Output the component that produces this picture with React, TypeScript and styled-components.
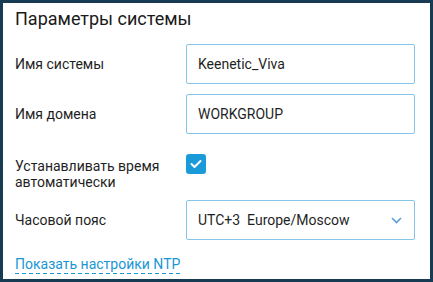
import React from "react";
import styled, { createGlobalStyle } from "styled-components";

const GlobalStyle = createGlobalStyle`
  html, body { margin: 0; padding: 0; background: #ffffff; }
  body { font-family: Roboto, "Noto Sans", Arial, sans-serif; }
  * { box-sizing: border-box; }
`;

const Panel = styled.div`
  width: 433px;
  height: 282px;
  border: 3px solid #173b53;
  background: #ffffff;
  padding: 4px 15px 0 12px;
  color: #1f1f1f;
`;

const Title = styled.h2`
  margin: 0 0 13px 0;
  font-size: 18px;
  font-weight: 400;
  line-height: 24px;
  color: #1a1a1a;
`;

const Form = styled.div`
  display: grid;
  grid-template-columns: 171px 229px;
  row-gap: 10px;
`;

const Label = styled.div<{ $top?: boolean }>`
  font-size: 14px;
  line-height: 16px;
  align-self: ${(p) => (p.$top ? "start" : "center")};
  margin-top: ${(p) => (p.$top ? "14px" : "0")};
  color: #1f1f1f;
`;

const Field = styled.div`
  height: 40px;
  border: 1px solid #84c6e8;
  border-radius: 2px;
  display: flex;
  align-items: center;
  padding: 0 12px 0 11px;
  font-size: 14px;
  color: #1f1f1f;
`;

const SelectText = styled.span`
  flex: 1;
  white-space: pre;
`;

const CheckCell = styled.div`
  height: 40px;
  padding-top: 10px;
`;

const Checkbox = styled.div`
  width: 20px;
  height: 20px;
  border-radius: 3px;
  background: #1a9ad8;
  display: flex;
  align-items: center;
  justify-content: center;
`;

const Footer = styled.div`
  display: flex;
  margin-top: 15px;
`;

const Link = styled.a`
  font-size: 14px;
  line-height: 18px;
  color: #1a96d4;
  text-decoration: none;
  padding-bottom: 1px;
  background-image: linear-gradient(to right, #1a96d4 0 4px, transparent 4px 7px);
  background-size: 7px 1px;
  background-repeat: repeat-x;
  background-position: 0 100%;
`;

export default function App() {
  return (
    <>
      <GlobalStyle />
      <Panel>
        <Title>Параметры системы</Title>
        <Form>
          <Label>Имя системы</Label>
          <Field>Keenetic_Viva</Field>
          <Label>Имя домена</Label>
          <Field>WORKGROUP</Field>
          <Label $top>
            Устанавливать время
            <br />
            автоматически
          </Label>
          <CheckCell>
            <Checkbox>
              <svg width="12" height="10" viewBox="0 0 12 10">
                <path d="M1.5 5 L4.5 8 L10.5 2" fill="none" stroke="#ffffff" strokeWidth="2" strokeLinecap="round" strokeLinejoin="round" />
              </svg>
            </Checkbox>
          </CheckCell>
          <Label>Часовой пояс</Label>
          <Field>
            <SelectText>UTC+3  Europe/Moscow</SelectText>
            <svg width="11" height="7" viewBox="0 0 11 7">
              <path d="M1 1 L5.5 5.5 L10 1" fill="none" stroke="#5b9dd6" strokeWidth="1.6" />
            </svg>
          </Field>
        </Form>
        <Footer>
          <Link href="#">Показать настройки NTP</Link>
        </Footer>
      </Panel>
    </>
  );
}
